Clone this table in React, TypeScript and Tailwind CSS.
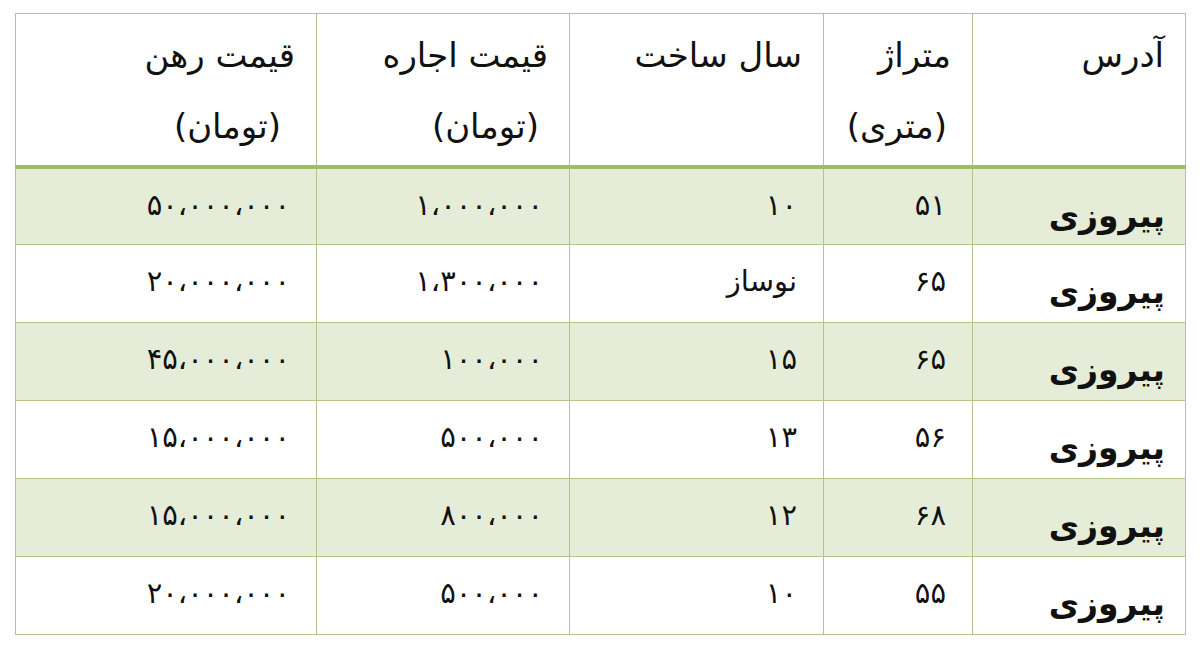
const FONT = '"DejaVu Sans", "Noto Sans", sans-serif';

interface Listing {
  address: string;
  area: string;
  built: string;
  rent: string;
  deposit: string;
}

const LISTINGS: Listing[] = [
  { address: 'پیروزی', area: '۵۱', built: '۱۰', rent: '۱،۰۰۰،۰۰۰', deposit: '۵۰،۰۰۰،۰۰۰' },
  { address: 'پیروزی', area: '۶۵', built: 'نوساز', rent: '۱،۳۰۰،۰۰۰', deposit: '۲۰،۰۰۰،۰۰۰' },
  { address: 'پیروزی', area: '۶۵', built: '۱۵', rent: '۱۰۰،۰۰۰', deposit: '۴۵،۰۰۰،۰۰۰' },
  { address: 'پیروزی', area: '۵۶', built: '۱۳', rent: '۵۰۰،۰۰۰', deposit: '۱۵،۰۰۰،۰۰۰' },
  { address: 'پیروزی', area: '۶۸', built: '۱۲', rent: '۸۰۰،۰۰۰', deposit: '۱۵،۰۰۰،۰۰۰' },
  { address: 'پیروزی', area: '۵۵', built: '۱۰', rent: '۵۰۰،۰۰۰', deposit: '۲۰،۰۰۰،۰۰۰' },
];

// title, unit line, column width, unit indent
const HEADERS: [string, string | null, string, string][] = [
  ['آدرس', null, 'w-[213px]', ''],
  ['متراژ', '(متری)', 'w-[149px]', 'pr-[4px]'],
  ['سال ساخت', null, 'w-[254px]', ''],
  ['قیمت اجاره', '(تومان)', 'w-[253px]', 'pr-[9px]'],
  ['قیمت رهن', '(تومان)', 'w-[301px]', 'pr-[14px]'],
];

const cellBorder = 'border border-[#b3c68a]';

function NumCell({ value }: { value: string }) {
  return (
    <td className={`${cellBorder} align-top pt-[22px] pr-[26px] text-right text-[29px] tracking-[3px] leading-none text-[#111]`}>
      {value}
    </td>
  );
}

export default function App() {
  return (
    <div className="w-[1200px] h-[652px] bg-white pt-[13px] pl-[15px]" style={{ fontFamily: FONT }}>
      <table dir="rtl" className="w-[1170px] border-collapse table-fixed border border-[#b3c68a]">
        <thead>
          <tr className="h-[153px]">
            {HEADERS.map(([title, unit, width, indent]) => (
              <th
                key={title}
                className={`${width} ${cellBorder} border-b-[4px] border-b-[#9fbd62] align-top pt-[6px] pr-[21px] text-right font-normal text-[34px] leading-[71px] text-[#111]`}
              >
                <div>{title}</div>
                {unit && <div className={indent}>{unit}</div>}
              </th>
            ))}
          </tr>
        </thead>
        <tbody>
          {LISTINGS.map((row, i) => (
            <tr key={i} className={`h-[78px] ${i % 2 === 0 ? 'bg-[#e5edd8]' : 'bg-white'}`}>
              <td className={`${cellBorder} align-top pt-[30px] pr-[20px] text-right text-[33px] font-bold leading-none text-[#111]`}>
                {row.address}
              </td>
              <NumCell value={row.area} />
              <NumCell value={row.built} />
              <NumCell value={row.rent} />
              <NumCell value={row.deposit} />
            </tr>
          ))}
        </tbody>
      </table>
    </div>
  );
}
